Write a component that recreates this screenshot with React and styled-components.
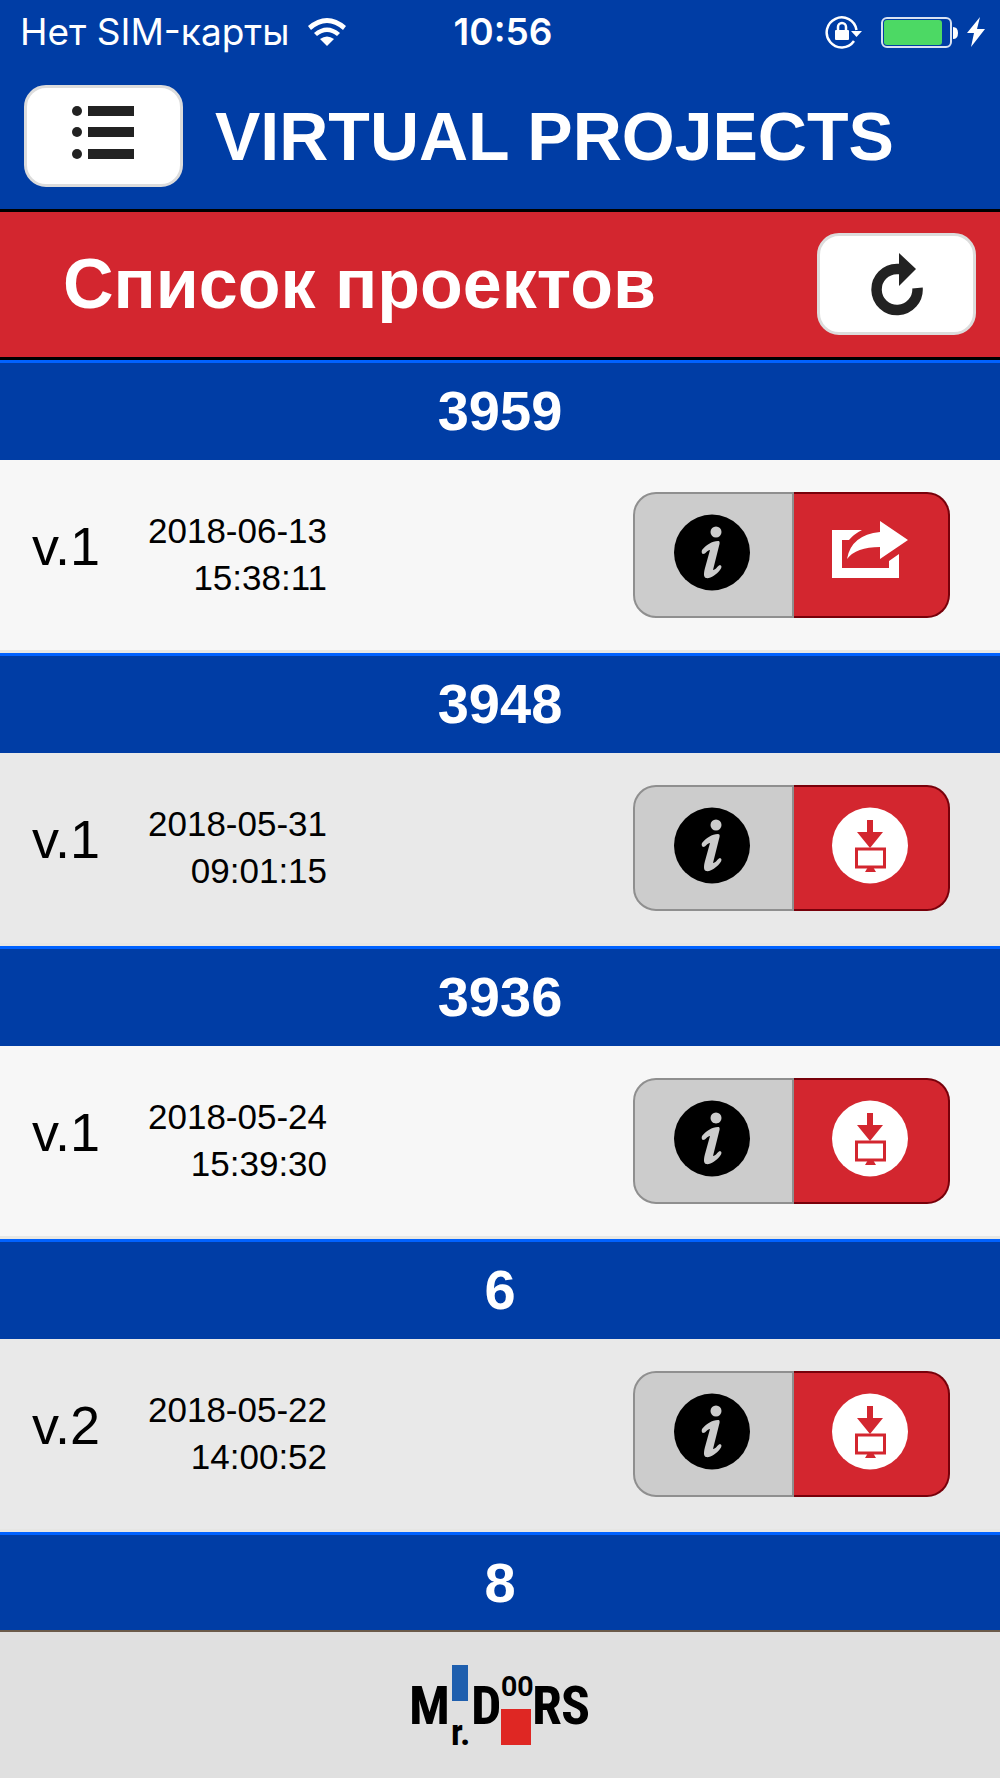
import React, { useState } from 'react';
import styled, { createGlobalStyle } from 'styled-components';

const GlobalStyle = createGlobalStyle`
  * {
    box-sizing: border-box;
  }

  body {
    margin: 0;
    font-family: 'Liberation Sans', Arial, sans-serif;
    color: #000;
  }

  button {
    padding: 0;
    margin: 0;
    cursor: pointer;
  }
`;

const StyledApp = styled.div`
  height: 100vh;
  display: flex;
  flex-direction: column;
  background: #e0e0e0;
`;

const StyledStatusBar = styled.div`
  flex: none;
  height: 64px;
  padding: 0 14px 0 20px;
  display: grid;
  grid-template-columns: 1fr auto 1fr;
  align-items: center;
  background: #003da5;
  color: #fff;
  font-family: Inter, sans-serif;
  font-size: 37px;
  line-height: 64px;

  .carrier {
    display: flex;
    align-items: center;
    gap: 18px;
    white-space: nowrap;
  }

  .time {
    font-weight: 600;
  }

  .power {
    display: flex;
    justify-content: flex-end;
    align-items: center;
  }

  svg {
    flex: none;
  }
`;

const StyledTopBar = styled.header`
  flex: none;
  display: flex;
  align-items: center;
  gap: 32px;
  padding: 21px 24px 22px;
  background: #003da5;
  border-bottom: 3px solid #000;

  h1 {
    margin: 0;
    font-size: 68px;
    line-height: 80px;
    color: #fff;
    white-space: nowrap;
  }
`;

const StyledSubBar = styled.div`
  flex: none;
  display: flex;
  align-items: center;
  justify-content: space-between;
  padding: 21px 24px 22px 63px;
  background: #d3262f;
  border-bottom: 3px solid #000;

  h2 {
    margin: 0;
    font-size: 70px;
    line-height: 80px;
    color: #fff;
    white-space: nowrap;
  }
`;

const ToolButton = styled.button`
  flex: none;
  width: 159px;
  height: 102px;
  display: flex;
  justify-content: center;
  align-items: center;
  background: #fff;
  border: 3px solid #dcdcdc;
  border-radius: 22px;
`;

const StyledList = styled.main`
  flex: 1;
  min-height: 0;
  overflow-y: auto;
  scrollbar-width: none;
`;

const ProjectNumber = styled.h3`
  height: 100px;
  margin: 0;
  border-top: 3px solid #0062ff;
  background: #003da5;
  color: #fff;
  font-size: 56px;
  line-height: 96px;
  text-align: center;
`;

const VersionRow = styled.div`
  display: flex;
  align-items: flex-start;
  padding: 32px 50px 32px 32px;
  background: ${props => (props.$shaded ? '#e9e9e9' : '#f7f7f7')};
  border-bottom: 3px solid ${props => (props.$shaded ? '#e6e6e4' : '#e8e8e4')};

  .version {
    width: 116px;
    font-size: 54px;
    line-height: 108px;
  }

  time {
    padding-top: 15px;
    font-size: 35px;
    line-height: 47px;
    text-align: right;
  }
`;

const ButtonGroup = styled.div`
  display: flex;
  margin-left: auto;
`;

const GroupButton = styled.button`
  height: 126px;
  display: flex;
  justify-content: center;
  align-items: center;
  padding: 0 3px 5px 0;
  border: 2px solid;

  &.info {
    width: 161px;
    background: #ccc;
    border-color: #8f8f8f;
    border-radius: 23px 0 0 23px;
  }

  &.action {
    width: 156px;
    background: #d3262f;
    border-color: #78000a;
    border-left: none;
    border-radius: 0 23px 23px 0;
  }
`;

const StyledFooter = styled.footer`
  flex: none;
  height: 148px;
  display: flex;
  justify-content: center;
  align-items: center;
  background: #e0e0e0;
  border-top: 2px solid #6b5b4a;
`;

const WifiIcon = () => (
  <svg width="40" height="30" viewBox="0 0 40 30" fill="#fff">
    <path d="M1 9 Q20 -7 39 9 L36 13 Q20 -1 4 13 Z" />
    <path d="M7 16 Q20 5 33 16 L30 19 Q20 11 10 19 Z" />
    <path d="M13 22 Q20 17 27 22 L20 29 Z" />
  </svg>
);

const LockIcon = () => (
  <svg width="38" height="34" viewBox="0 0 38 34" fill="none">
    <path d="M29 26 A15 15 0 1 1 31.500 15" stroke="#fff" strokeWidth="2.500" />
    <path d="M26 16 H37 L31.500 22 Z" fill="#fff" />
    <path d="M13 16 V12 a4 4 0 0 1 8 0 V16" stroke="#fff" strokeWidth="2.500" />
    <rect x="10" y="15" width="14" height="10" rx="1" fill="#fff" />
  </svg>
);

const BatteryIcon = () => (
  <svg width="103" height="34" viewBox="0 0 103 34">
    <rect x="19" y="3" width="69" height="29" rx="5" fill="none" stroke="#fff" strokeOpacity="0.85" strokeWidth="2" />
    <rect x="21" y="5" width="58" height="25" rx="3" fill="#4cd964" />
    <path d="M90 12 q5 0 5 6 t-5 6 Z" fill="#fff" />
  </svg>
);

const BoltIcon = () => (
  <svg width="20" height="32" viewBox="0 0 20 32">
    <path d="M14 1 L1 17 H8 L5 31 L19 13 H11 Z" fill="#fff" />
  </svg>
);

const ListIcon = () => (
  <svg width="64" height="60" viewBox="0 0 64 60" fill="#222">
    {[0, 21, 43].map(y => (
      <g key={y}>
        <circle cx="5" cy={y + 5} r="5" />
        <rect x="16" y={y} width="46" height="10" />
      </g>
    ))}
  </svg>
);

const RefreshIcon = () => (
  <svg width="52" height="64" viewBox="0 0 52 64">
    <path d="M28 17 H26 A20.500 20.500 0 1 0 46.500 36" fill="none" stroke="#222" strokeWidth="10.500" />
    <path d="M28 1 L45 17 L28 34 Z" fill="#222" />
  </svg>
);

const InfoIcon = () => (
  <svg width="76" height="77" viewBox="0 0 76 77">
    <circle cx="38" cy="38.500" r="38" />
    <circle cx="42" cy="18" r="5.500" fill="#ccc" />
    <path
      d="M28 36 C32 31 38 27 44 27 C46 27 46 29 45 32 L39 56 C42 56 43 52 46 51 Q49 52 46 56 C42 61 36 65 32 64 C29 63 30 58 31 54 L36 36 C33 36 32 40 29 40 Q27 39 28 36 Z"
      fill="#ccc"
    />
  </svg>
);

const ShareIcon = () => (
  <svg width="76" height="77" viewBox="0 0 76 77" fill="#fff">
    <path d="M0 16 H30 Q22 20 17 26 H10 V54 H57 V47 L67 40 V64 H0 Z" />
    <path d="M48 7 L76 26 L48 45 V33 Q24 33 15 45 Q19 21 48 18 Z" />
  </svg>
);

const DownloadIcon = () => (
  <svg width="76" height="77" viewBox="0 0 76 77">
    <circle cx="38" cy="38.500" r="38" fill="#fff" />
    <path d="M35 13 H41 V25 H51 L38 41 L25 25 H35 Z" fill="#d3262f" />
    <rect x="24.500" y="42" width="28" height="18" fill="none" stroke="#d3262f" strokeWidth="3" />
    <path d="M36 60 H41 L44 65 H33 Z" fill="#d3262f" />
  </svg>
);

const Logo = () => (
  <svg
    width="180"
    height="110"
    viewBox="0 -14 180 110"
    role="img"
    aria-label="Mr.Doors"
    fontFamily="'Roboto Condensed', 'Liberation Sans Narrow', sans-serif"
    fontWeight="700"
  >
    <rect x="42" y="1" width="16" height="36" fill="#1f5fae" />
    <rect x="91" y="45" width="30" height="36" fill="#df2723" />
    <text x="-1" y="60" fontSize="54">M</text>
    <text x="41" y="81" fontSize="36">r.</text>
    <text x="61" y="60" fontSize="54">D</text>
    <text x="91" y="32" fontSize="27">OO</text>
    <text x="122" y="60" fontSize="54">R</text>
    <text x="151" y="60" fontSize="54">S</text>
  </svg>
);

const initialProjects = [
  { number: '3959', version: 'v.1', date: '2018-06-13', time: '15:38:11', loaded: true },
  { number: '3948', version: 'v.1', date: '2018-05-31', time: '09:01:15', loaded: false },
  { number: '3936', version: 'v.1', date: '2018-05-24', time: '15:39:30', loaded: false },
  { number: '6', version: 'v.2', date: '2018-05-22', time: '14:00:52', loaded: false },
  { number: '8' },
];

function Project(props) {
  const { project, shaded } = props;

  return (
    <section>
      <ProjectNumber>{project.number}</ProjectNumber>
      {project.version && (
        <VersionRow $shaded={shaded}>
          <span className='version'>{project.version}</span>
          <time dateTime={`${project.date}T${project.time}`}>
            {project.date}<br />{project.time}
          </time>
          <ButtonGroup>
            <GroupButton className='info' type='button' aria-label='Информация'>
              <InfoIcon />
            </GroupButton>
            <GroupButton
              className='action'
              type='button'
              aria-label={project.loaded ? 'Поделиться' : 'Загрузить'}
            >
              {project.loaded ? <ShareIcon /> : <DownloadIcon />}
            </GroupButton>
          </ButtonGroup>
        </VersionRow>
      )}
    </section>
  );
}

function App() {
  const [projects, setProjects] = useState(initialProjects);

  return (
    <StyledApp>
      <GlobalStyle />
      <StyledStatusBar>
        <div className='carrier'>
          <span>Нет SIM-карты</span>
          <WifiIcon />
        </div>
        <span className='time'>10:56</span>
        <div className='power'>
          <LockIcon />
          <BatteryIcon />
          <BoltIcon />
        </div>
      </StyledStatusBar>
      <StyledTopBar>
        <ToolButton type='button' aria-label='Меню'>
          <ListIcon />
        </ToolButton>
        <h1>VIRTUAL PROJECTS</h1>
      </StyledTopBar>
      <StyledSubBar>
        <h2>Список проектов</h2>
        <ToolButton type='button' aria-label='Обновить' onClick={() => setProjects([...initialProjects])}>
          <RefreshIcon />
        </ToolButton>
      </StyledSubBar>
      <StyledList>
        {projects.map((project, i) => (
          <Project key={project.number} project={project} shaded={i % 2 === 1} />
        ))}
      </StyledList>
      <StyledFooter>
        <Logo />
      </StyledFooter>
    </StyledApp>
  );
}

export default App;
